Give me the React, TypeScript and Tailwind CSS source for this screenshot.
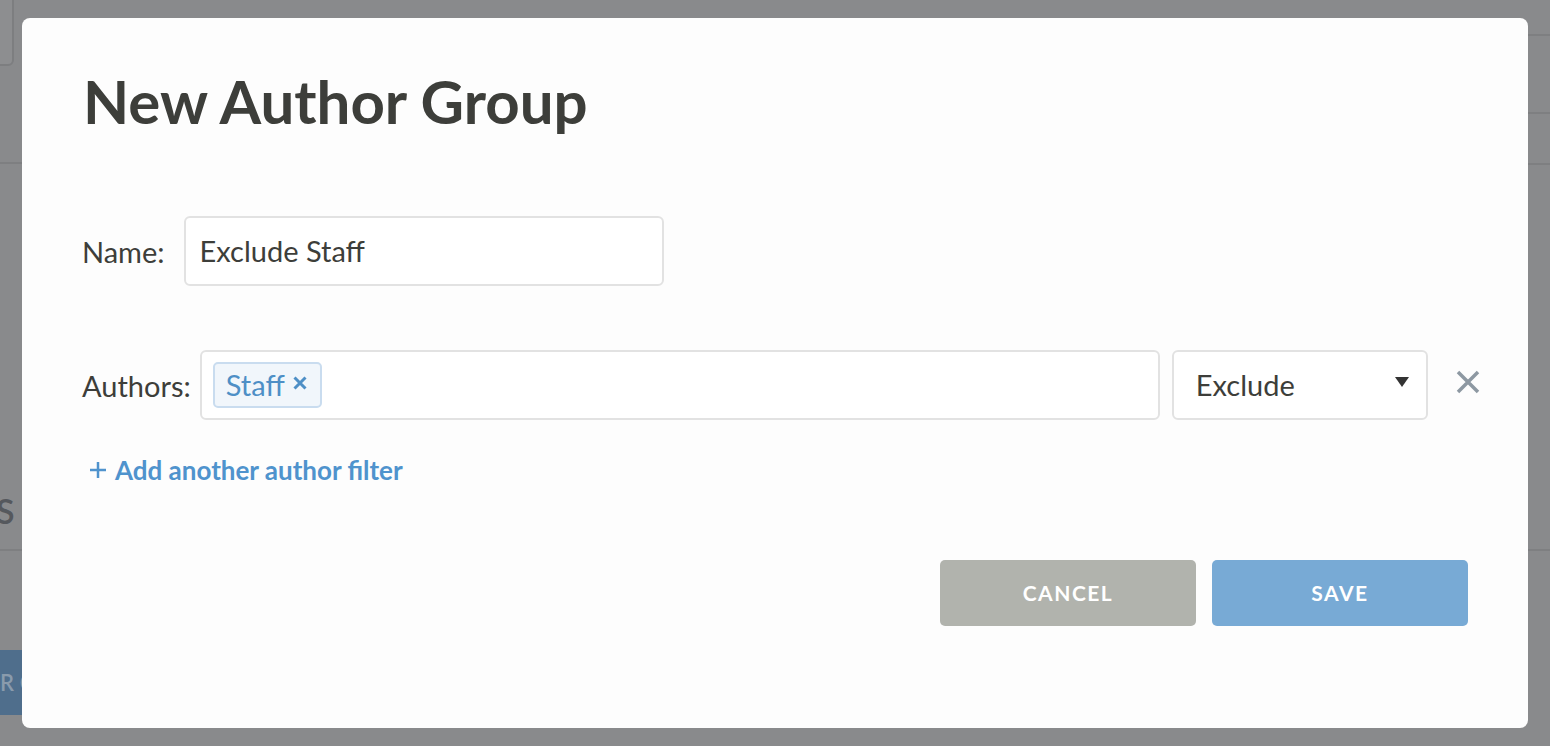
import React from "react";

const font = { fontFamily: "Lato, 'Noto Sans', sans-serif" };

export default function App() {
  return (
    <div
      className="relative h-[746px] w-[1550px] overflow-hidden bg-[#898a8c]"
      style={font}
    >
      {/* underlying page, dimmed by the overlay */}
      <div className="absolute left-[-10px] top-[-10px] h-[76px] w-[24px] rounded-[6px] border-2 border-[#7d7e80] bg-[#8d8e90]" />
      <div className="absolute left-0 top-[162px] h-[2px] w-[30px] bg-[#7e7f81]" />
      <div className="absolute left-[-4px] top-[494px] text-[34px] font-semibold leading-none text-[#55585d]">S</div>
      <div className="absolute left-0 top-[549px] h-[2px] w-[30px] bg-[#7e7f81]" />
      <div className="absolute left-0 top-[650px] flex h-[65px] w-[30px] items-center bg-[#4f6e8c] text-[22px] font-semibold tracking-[6px] text-[#8a9bac]">RC</div>
      <div className="absolute right-0 top-[34px] h-[2px] w-[30px] bg-[#7e7f81]" />
      <div className="absolute right-0 top-[112px] h-[2px] w-[30px] bg-[#7e7f81]" />
      <div className="absolute right-0 top-[163px] h-[2px] w-[30px] bg-[#7e7f81]" />
      <div className="absolute right-0 top-[549px] h-[2px] w-[30px] bg-[#7e7f81]" />

      {/* modal */}
      <div className="absolute left-[22px] top-[18px] flex h-[710px] w-[1506px] flex-col rounded-[8px] bg-[#fdfdfd] pl-[60px] pr-[60px] pt-[47px]">
        <h1 className="ml-[1px] text-[60px] font-bold leading-[72px] text-[#3d3e3a]">
          New Author Group
        </h1>

        <div className="mt-[79px] flex items-center">
          <span className="shrink-0 text-[29px] leading-none text-[#3d3e3a]">Name:</span>
          <div className="ml-[19px] flex h-[70px] w-[480px] shrink-0 items-center rounded-[6px] border-2 border-[#e2e2e2] bg-white pl-[14px] text-[29px] text-[#3d3e3a]">
            Exclude Staff
          </div>
        </div>

        <div className="mt-[64px] flex items-center">
          <span className="shrink-0 text-[29px] leading-none text-[#3d3e3a]">Authors:</span>
          <div className="ml-[9px] flex h-[70px] w-[960px] shrink-0 items-center rounded-[6px] border-2 border-[#e2e2e2] bg-white pl-[11px]">
            <div className="flex h-[46px] items-center gap-[7px] rounded-[5px] border-2 border-[#c9dcef] bg-[#f1f6fb] pl-[11px] pr-[12px] text-[29px] text-[#4e8fc6]">
              <span>Staff</span>
              <svg width="16" height="16" viewBox="0 0 16 16" className="mt-[-4px]">
                <path d="M2.5 2.5 L13.5 13.5 M13.5 2.5 L2.5 13.5" stroke="#4e8fc6" strokeWidth="3" strokeLinecap="butt" />
              </svg>
            </div>
          </div>
          <div className="ml-[12px] flex h-[70px] w-[256px] shrink-0 items-center justify-between rounded-[6px] border-2 border-[#e2e2e2] bg-white pl-[22px] pr-[16px] text-[29px] text-[#3d3e3a]">
            <span>Exclude</span>
            <svg width="16" height="12" viewBox="0 0 16 12" className="mt-[-6px]">
              <path d="M1 1 L15 1 L8 11 Z" fill="#333" />
            </svg>
          </div>
          <svg width="24" height="24" viewBox="0 0 24 24" className="ml-[28px] mt-[-6px] shrink-0">
            <path d="M2 2 L22 22 M22 2 L2 22" stroke="#8d98a2" strokeWidth="3.5" />
          </svg>
        </div>

        <div className="ml-[8px] mt-[32px] flex items-center gap-[9px] text-[26px] font-bold leading-[36px] text-[#4f93cd]">
          <svg width="16" height="16" viewBox="0 0 16 16">
            <path d="M8 0 L8 16 M0 8 L16 8" stroke="#4f93cd" strokeWidth="2.5" />
          </svg>
          <span>Add another author filter</span>
        </div>

        <div className="mt-[72px] flex justify-end gap-[16px]">
          <button className="flex h-[66px] w-[256px] items-center justify-center rounded-[5px] bg-[#b1b3ad] text-[21px] font-bold tracking-[1.5px] text-white">
            CANCEL
          </button>
          <button className="flex h-[66px] w-[256px] items-center justify-center rounded-[5px] bg-[#78aad5] text-[21px] font-bold tracking-[1.5px] text-white">
            SAVE
          </button>
        </div>
      </div>
    </div>
  );
}
